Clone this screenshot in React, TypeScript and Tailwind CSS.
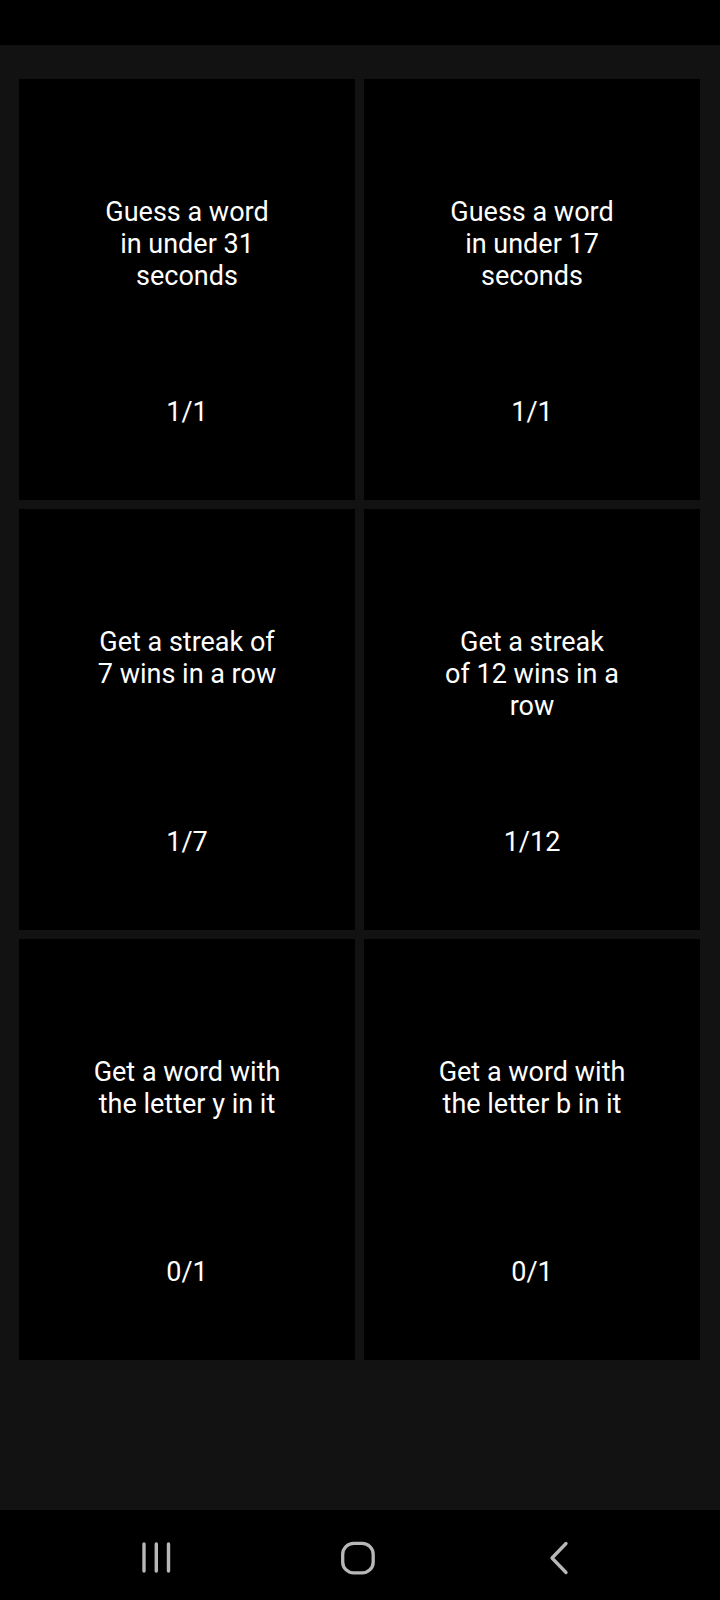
import React from "react";

type Item = { lines: string[]; count: string };

const items: Item[] = [
  { lines: ["Guess a word", "in under 31", "seconds"], count: "1/1" },
  { lines: ["Guess a word", "in under 17", "seconds"], count: "1/1" },
  { lines: ["Get a streak of", "7 wins in a row"], count: "1/7" },
  { lines: ["Get a streak", "of 12 wins in a", "row"], count: "1/12" },
  { lines: ["Get a word with", "the letter y in it"], count: "0/1" },
  { lines: ["Get a word with", "the letter b in it"], count: "0/1" },
];

function Card({ item }: { item: Item }) {
  return (
    <div className="flex h-[421px] flex-col items-center bg-black pt-[117px] text-center text-[27px] leading-[32px] text-white">
      <div className="h-[200px]">
        {item.lines.map((l, i) => (
          <div key={i} className="whitespace-nowrap">
            {l}
          </div>
        ))}
      </div>
      <div>{item.count}</div>
    </div>
  );
}

export default function App() {
  return (
    <div
      className="flex h-[1600px] w-[720px] flex-col bg-[#121212]"
      style={{ fontFamily: "Roboto, 'Noto Sans', sans-serif" }}
    >
      <div className="h-[45px] bg-black" />
      <div className="flex-1 pl-[19px] pt-[34px]">
        <div className="grid grid-cols-[336px_336px] gap-x-[9px] gap-y-[9px]">
          {items.map((it, i) => (
            <Card key={i} item={it} />
          ))}
        </div>
      </div>
      <div className="relative h-[90px] bg-black">
        <svg
          className="absolute left-[141px] top-[32px]"
          width="31"
          height="31"
          viewBox="0 0 31 31"
        >
          <g stroke="#b8b8b8" strokeWidth="3.4" strokeLinecap="round">
            <line x1="3" y1="2" x2="3" y2="29" />
            <line x1="15.3" y1="2" x2="15.3" y2="29" />
            <line x1="27.5" y1="2" x2="27.5" y2="29" />
          </g>
        </svg>
        <svg
          className="absolute left-[340px] top-[31px]"
          width="36"
          height="34"
          viewBox="0 0 36 34"
        >
          <rect
            x="2.7"
            y="2.4"
            width="30.5"
            height="29.5"
            rx="11"
            fill="none"
            stroke="#b8b8b8"
            strokeWidth="3.3"
          />
        </svg>
        <svg
          className="absolute left-[548px] top-[31px]"
          width="22"
          height="34"
          viewBox="0 0 22 34"
        >
          <polyline
            points="18,2.5 4,17 18,31.5"
            fill="none"
            stroke="#b8b8b8"
            strokeWidth="3.3"
            strokeLinecap="round"
            strokeLinejoin="round"
          />
        </svg>
      </div>
    </div>
  );
}
